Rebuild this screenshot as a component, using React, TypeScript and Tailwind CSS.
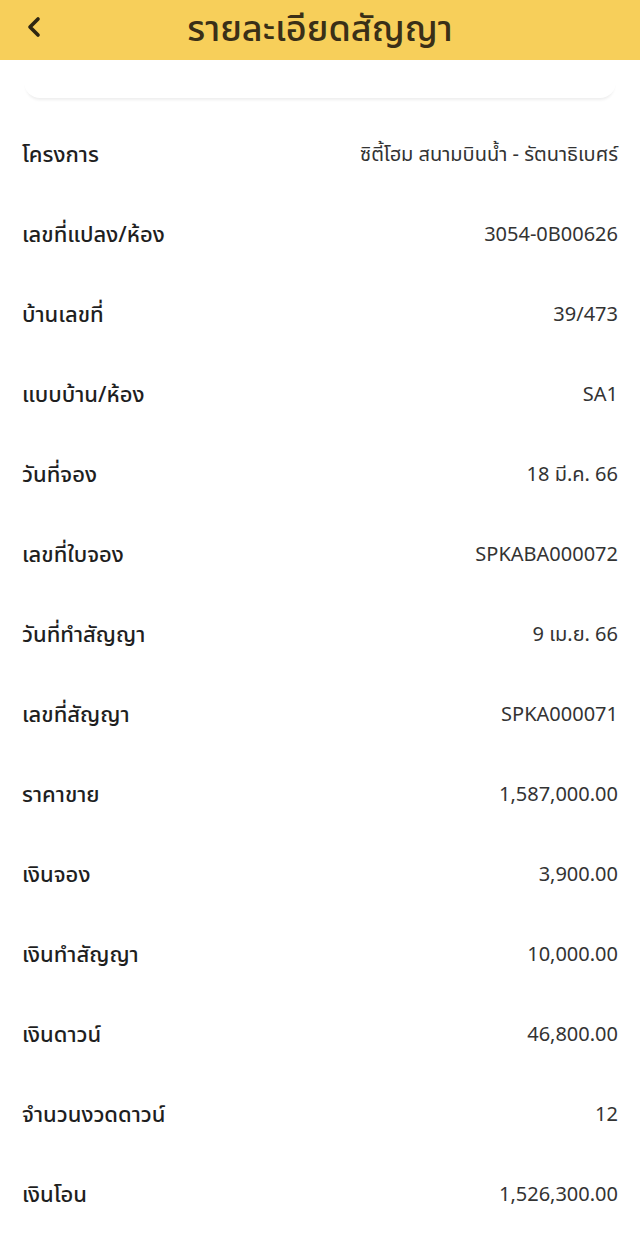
import { ChevronLeft } from 'lucide-react';

const rows: [string, string][] = [
  ['โครงการ', 'ซิตี้โฮม สนามบินน้ำ - รัตนาธิเบศร์'],
  ['เลขที่แปลง/ห้อง', '3054-0B00626'],
  ['บ้านเลขที่', '39/473'],
  ['แบบบ้าน/ห้อง', 'SA1'],
  ['วันที่จอง', '18 มี.ค. 66'],
  ['เลขที่ใบจอง', 'SPKABA000072'],
  ['วันที่ทำสัญญา', '9 เม.ย. 66'],
  ['เลขที่สัญญา', 'SPKA000071'],
  ['ราคาขาย', '1,587,000.00'],
  ['เงินจอง', '3,900.00'],
  ['เงินทำสัญญา', '10,000.00'],
  ['เงินดาวน์', '46,800.00'],
  ['จำนวนงวดดาวน์', '12'],
  ['เงินโอน', '1,526,300.00'],
];

export default function App() {
  return (
    <div className="min-h-[1236px] bg-white font-['Noto_Sans_Thai','Noto_Sans',sans-serif]">
      {/* header */}
      <div className="relative flex h-[60px] items-center justify-center bg-[#f7cf5a]">
        <button className="absolute left-[18px] top-[11px] text-[#2e2612]">
          <ChevronLeft className="h-8 w-8" strokeWidth={2.75} />
        </button>
        <h1 className="text-[36px] font-medium leading-none text-[#3a2f17]">รายละเอียดสัญญา</h1>
      </div>

      {/* empty summary card */}
      <div className="mx-[24px] h-[38px] rounded-b-2xl bg-white shadow-[0_4px_3px_-2px_rgba(0,0,0,0.07)]" />

      <div className="mt-[17px] flex flex-col">
        {rows.map(([label, value]) => (
          <div key={label} className="flex h-[80px] items-center justify-between px-[22px]">
            <span className="text-[22px] font-medium text-[#1f1f1f]">{label}</span>
            <span className="text-[20px] text-[#333333]">{value}</span>
          </div>
        ))}
      </div>
    </div>
  );
}
